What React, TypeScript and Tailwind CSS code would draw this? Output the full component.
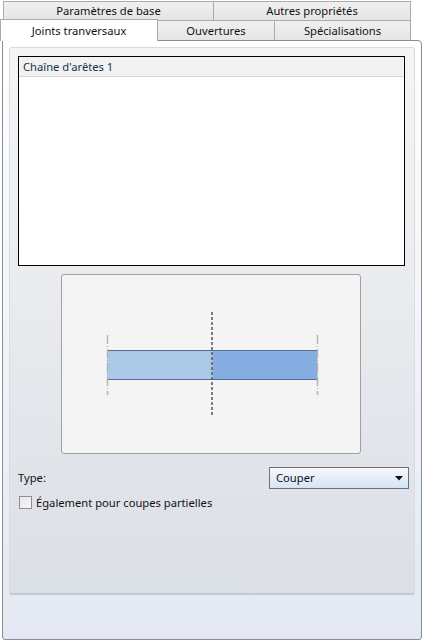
import React from "react";

export default function App() {
  return (
    <div className="w-[422px] h-[640px] bg-white flex flex-col font-['Noto_Sans',sans-serif] text-[11.2px] leading-none text-[#111]">
      {/* Tab row 1 */}
      <div className="flex pl-[3px] pt-[1px] h-[21px]">
        <div className="w-[211px] h-[20px] flex items-center justify-center border border-[#acacac] bg-gradient-to-b from-[#f0f0f0] to-[#e5e5e5]">
          Paramètres de base
        </div>
        <div className="w-[198px] h-[20px] -ml-px flex items-center justify-center border border-[#acacac] bg-gradient-to-b from-[#f0f0f0] to-[#e5e5e5]">
          Autres propriétés
        </div>
      </div>
      {/* Tab row 2 */}
      <div className="flex items-end h-[19px]">
        <div className="relative z-10 w-[158px] h-[22px] -mb-px flex items-center justify-center border border-b-0 border-[#acacac] bg-white">
          Joints tranversaux
        </div>
        <div className="w-[118px] h-[20px] -ml-px flex items-center justify-center border border-b-0 border-[#acacac] bg-gradient-to-b from-[#f0f0f0] to-[#e5e5e5]">
          Ouvertures
        </div>
        <div className="w-[137px] h-[20px] -ml-px flex items-center justify-center border border-b-0 border-[#acacac] bg-gradient-to-b from-[#f0f0f0] to-[#e5e5e5]">
          Spécialisations
        </div>
      </div>
      {/* Panel */}
      <div className="ml-[2px] w-[420px] h-[600px] border border-[#898c95] rounded-tr-[4px] rounded-b-[3px] bg-gradient-to-b from-white to-[#e3e8f2] pt-[6px] pl-[6px] pr-[6px] flex flex-col">
        <div className="w-[406px] h-[548px] rounded-[3px] border border-[#d8dce2] border-b-[#c3c8d0] border-b-2 bg-gradient-to-b from-[#f5f5f5] to-[#dbdfe6] pt-[8px] pl-[8px] pr-[9px] flex flex-col">
          {/* List */}
          <div className="w-[387px] h-[210px] border border-black bg-white flex flex-col">
            <div className="h-[20px] bg-[#f2f2f2] border-b border-[#d5d5d5] flex items-center pl-[4px] text-[#1c2f4f]">
              Chaîne d'arêtes 1
            </div>
          </div>
          {/* Preview */}
          <div className="mt-[8px] ml-[43px] w-[300px] h-[180px] rounded-[3px] border border-[#a0a0a0] bg-[#f4f4f4]">
            <svg width="298" height="178" viewBox="0 0 298 178">
              <rect x="45" y="75" width="105.5" height="30" fill="#abc9e6" />
              <rect x="150.5" y="75" width="105" height="30" fill="#86ade1" />
              <line x1="45" y1="75.5" x2="255.5" y2="75.5" stroke="#53708f" strokeWidth="1" />
              <line x1="45" y1="104.5" x2="255.5" y2="104.5" stroke="#4d6d96" strokeWidth="1" />
              <line x1="45.5" y1="60" x2="45.5" y2="120" stroke="#b5b5b5" strokeWidth="1.5" strokeDasharray="9 2 1 2" />
              <line x1="255.5" y1="60" x2="255.5" y2="120" stroke="#b5b5b5" strokeWidth="1.5" strokeDasharray="9 2 1 2" />
              <line x1="150" y1="37" x2="150" y2="142" stroke="#555" strokeWidth="1.5" strokeDasharray="3 2" />
            </svg>
          </div>
          {/* Type row */}
          <div className="mt-[13px] flex items-center justify-between mr-[-4px]">
            <span className="text-[#111]">Type:</span>
            <div className="w-[140px] h-[22px] border border-[#707070] bg-gradient-to-b from-[#f7f9fc] to-[#d5e4f6] flex items-center justify-between pl-[6px] pr-[5px]">
              <span>Couper</span>
              <svg width="8" height="5" viewBox="0 0 8 5">
                <path d="M0 0 L8 0 L4 4.5 Z" fill="#111" />
              </svg>
            </div>
          </div>
          {/* Checkbox */}
          <div className="mt-[7px] flex items-center gap-[4px] pl-[1px]">
            <div className="w-[13px] h-[13px] border border-[#8e8f8f] bg-gradient-to-br from-[#e8e8e8] to-[#f6f6f6]" />
            <span>Également pour coupes partielles</span>
          </div>
        </div>
      </div>
    </div>
  );
}
